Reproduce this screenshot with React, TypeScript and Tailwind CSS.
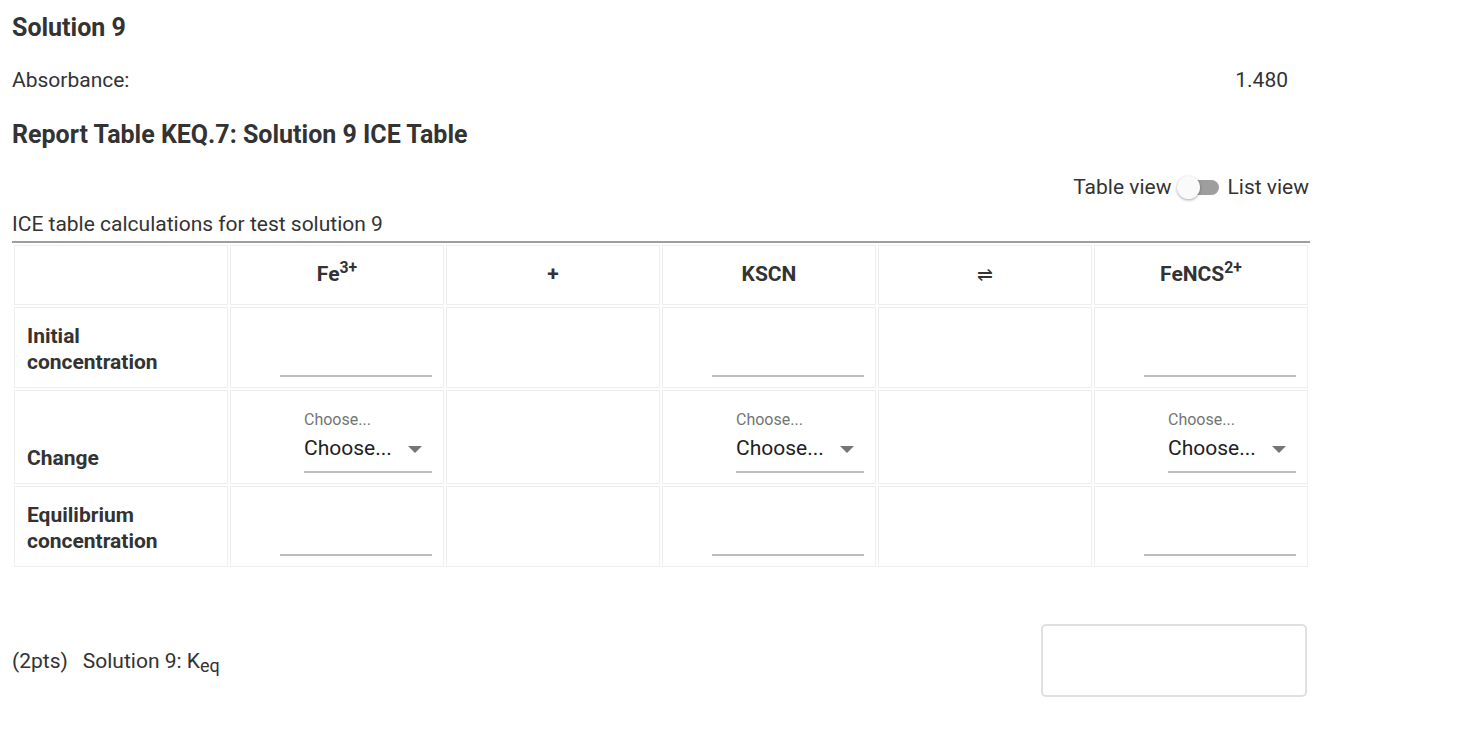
import React from "react";

const cols = ["Fe", "+", "KSCN", "⇌", "FeNCS"];

function Underline() {
    return (
        <div className="ml-auto w-[152px] h-[30px] border-b-2 border-[#bdbdbd]" />
    );
}

function ChooseSelect() {
    return (
        <div className="ml-auto w-[128px] border-b-2 border-[#bdbdbd] pb-[11px]">
            <div className="text-[16px] leading-[18px] text-[#757575]">Choose...</div>
            <div className="flex items-center justify-between mt-[7px] text-[21px] leading-[24px] text-[#222]">
                <span>Choose...</span>
                <svg width="14" height="8" viewBox="0 0 14 8" className="mr-[10px] mt-[3px]">
                    <path d="M0 0 L14 0 L7 7 Z" fill="#757575" />
                </svg>
            </div>
        </div>
    );
}

export default function App() {
    const rows = [
        { label: ["Initial", "concentration"], kind: "input", h: "h-[81px]" },
        { label: ["Change"], kind: "select", h: "h-[94px]" },
        { label: ["Equilibrium", "concentration"], kind: "input", h: "h-[81px]" },
    ];

    return (
        <div className="bg-white min-h-[731px] text-[#333] font-['Roboto',sans-serif] pl-[12px] pt-[12px]">
            <div className="w-[1298px]">
                <h2 className="text-[25px] leading-[32px] font-bold">Solution 9</h2>
                <div className="flex justify-between pr-[22px] mt-[23px] text-[21px] leading-[26px]">
                    <span>Absorbance:</span>
                    <span>1.480</span>
                </div>
                <h3 className="text-[25px] leading-[32px] font-bold mt-[26px]">
                    Report Table KEQ.7: Solution 9 ICE Table
                </h3>

                <div className="flex justify-end items-center mt-[23px] pr-[1px] text-[21px] leading-[26px]">
                    <span>Table view</span>
                    <div className="relative w-[44px] h-[24px] mx-[6px] flex items-center">
                        <div className="absolute left-[8px] right-[2px] h-[15px] rounded-full bg-[#9e9e9e]" />
                        <div className="absolute left-0 w-[23px] h-[23px] rounded-full bg-[#fafafa] shadow-[0_1px_3px_rgba(0,0,0,0.35)]" />
                    </div>
                    <span>List view</span>
                </div>

                <div className="mt-[11px] text-[21px] leading-[26px] pb-[4px] border-b-2 border-[#9e9e9e]">
                    ICE table calculations for test solution 9
                </div>

                <table className="table-fixed w-[1298px] border-separate border-spacing-[2px]">
                    <thead>
                        <tr className="h-[60px]">
                            <th className="border border-[#eeeeee]" />
                            {cols.map((c, i) => (
                                <th key={i} className="border border-[#eeeeee] text-[21px] font-bold text-center align-middle">
                                    {c === "Fe" && (<span>Fe<sup>3+</sup></span>)}
                                    {c === "FeNCS" && (<span>FeNCS<sup>2+</sup></span>)}
                                    {c === "⇌" && <span className="font-normal text-[19px]">⇌</span>}
                                    {c !== "Fe" && c !== "FeNCS" && c !== "⇌" && c}
                                </th>
                            ))}
                        </tr>
                    </thead>
                    <tbody>
                        {rows.map((r, ri) => (
                            <tr key={ri} className={r.h}>
                                <td className="border border-[#eeeeee] align-bottom pl-[12px] pb-[12px] text-[21px] leading-[26px] font-bold">
                                    {r.label.map((l) => (
                                        <div key={l}>{l}</div>
                                    ))}
                                </td>
                                {cols.map((_, ci) => (
                                    <td key={ci} className="border border-[#eeeeee] align-bottom pr-[11px] pb-[10px]">
                                        {ci % 2 === 0 && (r.kind === "input" ? <Underline /> : <ChooseSelect />)}
                                    </td>
                                ))}
                            </tr>
                        ))}
                    </tbody>
                </table>

                <div className="flex items-center justify-between mt-[55px] pr-[3px] text-[21px] leading-[26px]">
                    <div className="flex items-center">
                        <span>(2pts)</span>
                        <span className="ml-[15px]">
                            Solution 9: K<sub className="text-[18px]">eq</sub>
                        </span>
                    </div>
                    <div className="w-[266px] h-[73px] border-2 border-[#e0e0e0] rounded-[5px]" />
                </div>
            </div>
        </div>
    );
}
